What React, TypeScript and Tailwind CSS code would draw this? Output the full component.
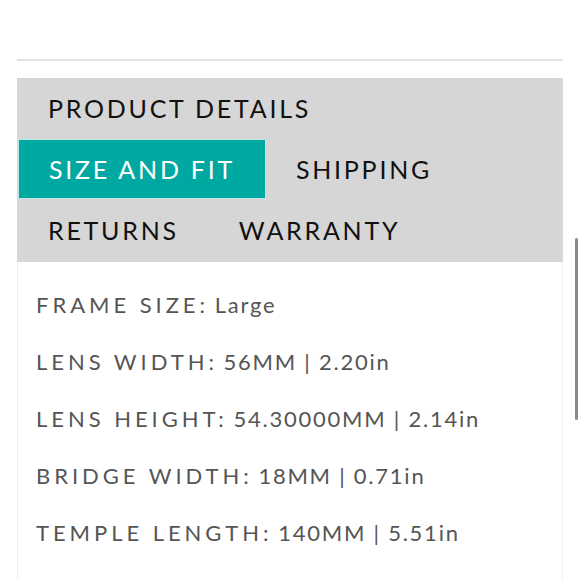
const tabs = [
  { key: "details", title: "PRODUCT DETAILS" },
  { key: "size", title: "SIZE AND FIT" },
  { key: "shipping", title: "SHIPPING" },
  { key: "returns", title: "RETURNS" },
  { key: "warranty", title: "WARRANTY" },
];

const specs = [
  { label: "FRAME SIZE:", value: "Large" },
  { label: "LENS WIDTH:", value: "56MM | 2.20in" },
  { label: "LENS HEIGHT:", value: "54.30000MM | 2.14in" },
  { label: "BRIDGE WIDTH:", value: "18MM | 0.71in" },
  { label: "TEMPLE LENGTH:", value: "140MM | 5.51in" },
];

export default function App() {
  const active = "size";

  return (
    <div
      className="relative w-[580px] h-[580px] overflow-hidden bg-white"
      style={{ fontFamily: "Lato, 'Noto Sans', sans-serif" }}
    >
      <div className="px-[17px] pt-[59px]">
        {/* divider */}
        <div className="h-[2px] bg-[#e3e3e3]" />

        {/* tabs */}
        <div className="mt-[17px] bg-[#d6d6d6] flex flex-wrap pl-px pb-px">
          {tabs.map((tab) => (
            <button
              key={tab.key}
              className={`px-[30px] text-[25px] tracking-[0.11em] leading-none ${
                active === tab.key
                  ? "bg-[#00a8a2] text-white border border-[#bfe9e6] h-[60px] px-[29px]"
                  : "text-[#111] h-[61px]"
              }`}
            >
              {tab.title}
            </button>
          ))}
        </div>

        {/* content */}
        <div className="border-x border-[#f0f0f0] pl-[18px] pt-[29px] h-[320px] flex flex-col gap-[30px] text-[22px] text-[#555] leading-[27px]">
          {specs.map((s) => (
            <div key={s.label} className="whitespace-nowrap">
              <span className="tracking-[0.18em]">{s.label}</span>{" "}
              <span className="tracking-[0.08em]">{s.value}</span>
            </div>
          ))}
        </div>
      </div>

      {/* scrollbar */}
      <div className="absolute right-[2px] top-[238px] w-[3px] h-[182px] rounded-full bg-[#8a8a8a]" />
    </div>
  );
}
